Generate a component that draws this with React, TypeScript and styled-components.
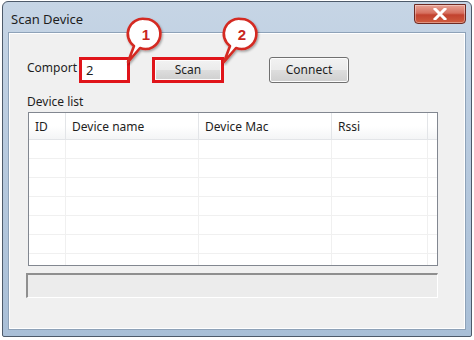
import React from "react";
import styled, { createGlobalStyle } from "styled-components";

const GlobalStyle = createGlobalStyle`
  html, body {
    margin: 0;
    padding: 0;
    background: #ffffff;
    font-family: "Noto Sans", "Liberation Sans", sans-serif;
  }
`;

const columns = [
  { title: "ID", width: 37 },
  { title: "Device name", width: 133 },
  { title: "Device Mac", width: 133 },
  { title: "Rssi", width: 96 },
];

const rows = [0, 1, 2, 3, 4, 5, 6];

const Callout = ({ n }: { n: number }) => (
  <svg width="44" height="50" viewBox="0 0 44 50">
    <defs>
      <filter id={`sh${n}`} x="-20%" y="-20%" width="140%" height="140%">
        <feDropShadow dx="1" dy="1.5" stdDeviation="1.2" floodOpacity="0.35" />
      </filter>
    </defs>
    <path
      d="M22 3 A15 15 0 1 1 17 32 L5 46 L11 30 A15 15 0 0 1 22 3 Z"
      fill="#fff"
      stroke="#d42a22"
      strokeWidth="2.6"
      strokeLinejoin="round"
      filter={`url(#sh${n})`}
    />
    <text
      x="23"
      y="24"
      textAnchor="middle"
      fontFamily="Liberation Sans, Arial, sans-serif"
      fontWeight="bold"
      fontSize="15"
      fill="#c8261e"
    >
      {n}
    </text>
  </svg>
);

export default function App() {
  return (
    <>
      <GlobalStyle />
      <Page>
        <Window>
          <TitleBar>
            <Title>Scan Device</Title>
            <CloseButton>
              <svg width="14" height="12" viewBox="0 0 14 12">
                <path d="M2 1 L12 11 M12 1 L2 11" stroke="#fff" strokeWidth="3" strokeLinecap="square" />
              </svg>
            </CloseButton>
          </TitleBar>
          <Client>
            <BubbleOne>
              <Callout n={1} />
            </BubbleOne>
            <BubbleTwo>
              <Callout n={2} />
            </BubbleTwo>
            <TopRow>
              <Label>Comport</Label>
              <Input $marked>2</Input>
              <Button $marked>Scan</Button>
              <Button $wide>Connect</Button>
            </TopRow>
            <ListLabel>Device list</ListLabel>
            <Table>
              <HeaderRow>
                {columns.map((c) => (
                  <HeaderCell key={c.title} style={{ width: c.width }}>
                    {c.title}
                  </HeaderCell>
                ))}
                <HeaderFill />
              </HeaderRow>
              {rows.map((r) => (
                <Row key={r}>
                  {columns.map((c) => (
                    <Cell key={c.title} style={{ width: c.width }} />
                  ))}
                </Row>
              ))}
            </Table>
            <StatusBar />
          </Client>
        </Window>
      </Page>
    </>
  );
}

const Page = styled.div`
  width: 474px;
  height: 340px;
  padding: 1px 2px 3px 2px;
  box-sizing: border-box;
  background: #fff;
`;

const Window = styled.div`
  height: 336px;
  display: flex;
  flex-direction: column;
  background: linear-gradient(180deg, #c6d5e5 0%, #b9cbdf 40%, #a9bfd7 100%);
  border: 1px solid #4d5a6a;
  border-radius: 6px 6px 2px 2px;
  box-sizing: border-box;
  padding: 0 5px 6px 5px;
`;

const TitleBar = styled.div`
  height: 30px;
  display: flex;
  align-items: flex-start;
  justify-content: space-between;
`;

const Title = styled.div`
  font-size: 13px;
  color: #1e1e1e;
  margin: 8px 0 0 3px;
`;

const CloseButton = styled.div`
  width: 50px;
  height: 18px;
  margin: 2px 0 0 0;
  border: 1px solid #6e2a22;
  border-radius: 0 0 4px 4px;
  background: linear-gradient(180deg, #e8a295 0%, #d6705f 45%, #c2422f 55%, #cf5c3e 100%);
  display: flex;
  align-items: center;
  justify-content: center;
  box-shadow: inset 0 0 0 1px rgba(255, 255, 255, 0.35);
`;

const Client = styled.div`
  position: relative;
  flex: 1;
  background: #f0f0f0;
  border: 1px solid #8ea2b8;
  box-shadow: inset 0 0 0 1px #ffffff;
  padding: 23px 27px 0 18px;
  display: flex;
  flex-direction: column;
`;

const BubbleOne = styled.div`
  position: absolute;
  left: 114px;
  top: -17px;
`;

const BubbleTwo = styled.div`
  position: absolute;
  left: 210px;
  top: -17px;
`;

const TopRow = styled.div`
  display: flex;
  align-items: center;
  height: 27px;
`;

const Label = styled.div`
  font-size: 12px;
  color: #1e1e1e;
  width: 52px;
  margin-top: -4px;
`;

const Input = styled.div<{ $marked?: boolean }>`
  width: 41px;
  height: 20px;
  background: #fff;
  border: 3px solid ${(p) => (p.$marked ? "#e0141a" : "#abadb3")};
  font-size: 13px;
  color: #1e1e1e;
  padding-left: 4px;
  line-height: 20px;
  box-sizing: content-box;
  margin-right: 22px;
`;

const Button = styled.div<{ $marked?: boolean; $wide?: boolean }>`
  width: ${(p) => (p.$wide ? "78px" : "66px")};
  height: ${(p) => (p.$marked ? "20px" : "24px")};
  border: ${(p) => (p.$marked ? "3px solid #e0141a" : "1px solid #707070")};
  border-radius: ${(p) => (p.$marked ? "0" : "3px")};
  background: linear-gradient(180deg, #f2f2f2 0%, #ebebeb 48%, #dddddd 52%, #cfcfcf 100%);
  box-shadow: inset 0 0 0 1px #fcfcfc;
  display: flex;
  align-items: center;
  justify-content: center;
  font-size: 12px;
  color: #1e1e1e;
  margin-right: ${(p) => (p.$marked ? "45px" : "0")};
`;

const ListLabel = styled.div`
  font-size: 12px;
  color: #1e1e1e;
  margin: 11px 0 2px 0;
  line-height: 16px;
`;

const Table = styled.div`
  margin-left: 1px;
  height: 152px;
  background: #fff;
  border: 1px solid #828790;
  display: flex;
  flex-direction: column;
  overflow: hidden;
`;

const HeaderRow = styled.div`
  display: flex;
  height: 26px;
  flex-shrink: 0;
  background: linear-gradient(180deg, #ffffff 0%, #ffffff 50%, #f4f5f6 100%);
  border-bottom: 1px solid #e3e5e8;
`;

const HeaderCell = styled.div`
  box-sizing: border-box;
  border-right: 1px solid #e3e5e8;
  font-size: 12px;
  color: #1e1e1e;
  display: flex;
  align-items: center;
  padding-left: 6px;
`;

const HeaderFill = styled.div`
  flex: 1;
`;

const Row = styled.div`
  display: flex;
  height: 18px;
  flex-shrink: 0;
  border-bottom: 1px solid #f0f0f0;
`;

const Cell = styled.div`
  box-sizing: border-box;
  border-right: 1px solid #f0f0f0;
`;

const StatusBar = styled.div`
  margin: 7px 0 0 -1px;
  height: 22px;
  border-top: 2px solid #8f8f8f;
  border-left: 2px solid #8f8f8f;
  border-right: 1px solid #ffffff;
  border-bottom: 1px solid #ffffff;
  background: #ececec;
`;
